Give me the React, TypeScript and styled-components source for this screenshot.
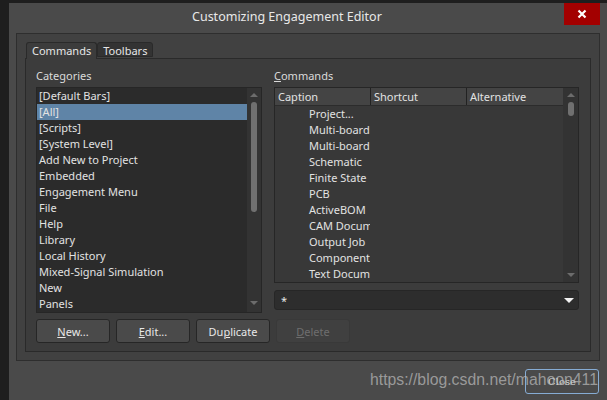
import styled, { createGlobalStyle } from 'styled-components';

const GlobalStyle = createGlobalStyle`
  html, body {
    margin: 0;
    padding: 0;
    background: #1e1e1e;
  }
  body {
    font-family: 'Noto Sans', 'DejaVu Sans', sans-serif;
    font-size: 11px;
    color: #e0e0e0;
  }
`;

interface ActiveProps {
  $active?: boolean;
}

interface ThumbProps {
  $top: number;
  $length: number;
}

const Screen = styled.div`
  width: 607px;
  height: 400px;
  box-sizing: border-box;
  padding: 3px 0 0 9px;
  display: flex;
  overflow: hidden;
`;

const Window = styled.div`
  flex: 1;
  display: flex;
  flex-direction: column;
  background: #4a4a4a;
`;

const TitleBar = styled.div`
  height: 30px;
  display: flex;
  align-items: flex-start;
  flex-shrink: 0;
`;

const Title = styled.div`
  margin-left: 183px;
  line-height: 28px;
  font-size: 12.5px;
  color: #e8e8e8;
`;

const CloseX = styled.button`
  margin-left: auto;
  margin-right: 7px;
  width: 36px;
  height: 22px;
  border: none;
  padding: 0;
  background: #a30000;
  display: flex;
  align-items: center;
  justify-content: center;
`;

const GroupBox = styled.div`
  margin: 0 7px;
  height: 328px;
  flex-shrink: 0;
  box-sizing: border-box;
  border: 1px solid #2e2e2e;
  background: #414141;
  padding: 8px;
  display: flex;
  flex-direction: column;
`;

const TabRow = styled.div`
  display: flex;
  align-items: flex-end;
  height: 16px;
  padding-left: 1px;
  position: relative;
  z-index: 1;
`;

const Tab = styled.div<ActiveProps>`
  box-sizing: border-box;
  height: ${(p) => (p.$active ? '17px' : '15px')};
  margin-bottom: ${(p) => (p.$active ? '-1px' : '1px')};
  padding: 0 5px;
  line-height: 15px;
  border: 1px solid #2a2a2a;
  border-bottom: ${(p) => (p.$active ? 'none' : '1px solid #2a2a2a')};
  border-radius: 3px 3px 0 0;
  background: ${(p) => (p.$active ? '#3c3c3c' : '#333333')};
  color: #e6e6e6;
  white-space: nowrap;
`;

const TabPage = styled.div`
  flex: 1;
  border: 1px solid #2a2a2a;
  background: #3c3c3c;
  padding: 9px 11px 0 10px;
  display: grid;
  grid-template-columns: 226px 305px;
  grid-template-rows: auto auto;
  column-gap: 12px;
  align-items: start;
  align-content: start;
`;

const Column = styled.div`
  display: flex;
  flex-direction: column;
`;

const FieldLabel = styled.div`
  line-height: 16px;
  margin-bottom: 3px;
  color: #dadada;
`;

const U = styled.span`
  text-decoration: underline;
`;

const ListBox = styled.div<{ $height: number; $bg: string }>`
  height: ${(p) => p.$height}px;
  box-sizing: border-box;
  border: 1px solid #262626;
  background: ${(p) => p.$bg};
  display: flex;
  overflow: hidden;
`;

const ListItems = styled.div`
  flex: 1;
  overflow: hidden;
`;

const CategoryItem = styled.div<ActiveProps>`
  height: 16px;
  line-height: 16px;
  padding-left: 2px;
  white-space: nowrap;
  color: #e2e2e2;
  background: ${(p) => (p.$active ? '#5f84a7' : 'transparent')};
`;

const ScrollTrack = styled.div<{ $width: number; $bottom: number }>`
  width: ${(p) => p.$width}px;
  flex-shrink: 0;
  background: #333333;
  display: flex;
  flex-direction: column;
  align-items: center;
  padding: 5px 0 ${(p) => p.$bottom}px;
  box-sizing: border-box;
`;

const ArrowUp = styled.div`
  width: 0;
  height: 0;
  border-left: 4px solid transparent;
  border-right: 4px solid transparent;
  border-bottom: 4px solid #6c6c6c;
`;

const ArrowDown = styled.div`
  margin-top: auto;
  width: 0;
  height: 0;
  border-left: 4px solid transparent;
  border-right: 4px solid transparent;
  border-top: 4px solid #6c6c6c;
`;

const Thumb = styled.div<ThumbProps>`
  margin-top: ${(p) => p.$top}px;
  width: 6px;
  height: ${(p) => p.$length}px;
  border-radius: 3px;
  background: #707070;
`;

const Header = styled.div`
  display: flex;
  height: 18px;
  box-sizing: border-box;
  border-bottom: 1px solid #2c2c2c;
  background: #444444;
`;

const HeaderCell = styled.div<{ $width?: number; $sep?: boolean }>`
  width: ${(p) => (p.$width ? `${p.$width}px` : 'auto')};
  flex: ${(p) => (p.$width ? 'none' : '1')};
  padding-left: 3px;
  box-sizing: border-box;
  line-height: 17px;
  color: #e2e2e2;
  border-left: ${(p) => (p.$sep ? '1px solid #222' : 'none')};
  white-space: nowrap;
`;

const CommandRow = styled.div`
  display: flex;
  height: 16px;
  line-height: 16px;
`;

const CaptionCell = styled.div`
  width: 95px;
  padding-left: 34px;
  box-sizing: border-box;
  overflow: hidden;
  white-space: nowrap;
  color: #e2e2e2;
`;

const ButtonRow = styled.div`
  grid-column: 1 / -1;
  display: flex;
  gap: 6px;
  margin-top: 6px;
`;

const Button = styled.button<{ $disabled?: boolean }>`
  width: 74px;
  height: 24px;
  flex-shrink: 0;
  padding: 0;
  font-family: inherit;
  font-size: 11px;
  border-radius: 3px;
  border: 1px solid ${(p) => (p.$disabled ? '#393939' : '#262626')};
  background: ${(p) => (p.$disabled ? '#404040' : '#4a4a4a')};
  color: ${(p) => (p.$disabled ? '#6e6e6e' : '#e8e8e8')};
`;

const Combo = styled.div`
  margin-top: 7px;
  height: 20px;
  box-sizing: border-box;
  border: 1px solid #262626;
  border-radius: 3px;
  background: #2d2d2d;
  display: flex;
  align-items: center;
  padding: 0 4px 0 6px;
  color: #e8e8e8;
`;

const ComboArrow = styled.div`
  margin-left: auto;
  width: 0;
  height: 0;
  border-left: 5px solid transparent;
  border-right: 5px solid transparent;
  border-top: 5px solid #f2f2f2;
`;

const Footer = styled.div`
  flex: 1;
  display: flex;
  justify-content: flex-end;
  align-items: flex-start;
  padding: 8px 8px 0 0;
  position: relative;
`;

const CloseButton = styled.button`
  width: 74px;
  height: 25px;
  padding: 0;
  border: 1px solid #86acd4;
  border-radius: 3px;
  background: #4a4a4a;
  color: #d8d8d8;
  font-family: 'DejaVu Serif', serif;
  font-size: 10px;
`;

const Watermark = styled.div`
  position: absolute;
  right: 9px;
  top: 10px;
  font-family: 'Liberation Sans', Arial, sans-serif;
  font-size: 15.8px;
  line-height: 18px;
  color: rgba(190, 190, 190, 0.7);
  pointer-events: none;
  white-space: nowrap;
`;

const categories = [
  '[Default Bars]',
  '[All]',
  '[Scripts]',
  '[System Level]',
  'Add New to Project',
  'Embedded',
  'Engagement Menu',
  'File',
  'Help',
  'Library',
  'Local History',
  'Mixed-Signal Simulation',
  'New',
  'Panels',
  'Project',
];

const commands = [
  'Project...',
  'Multi-board',
  'Multi-board',
  'Schematic',
  'Finite State',
  'PCB',
  'ActiveBOM',
  'CAM Document',
  'Output Job',
  'Component',
  'Text Document',
];

const App = () => {
  return (
    <Screen>
      <GlobalStyle />
      <Window>
        <TitleBar>
          <Title>Customizing Engagement Editor</Title>
          <CloseX aria-label="close">
            <svg width="10" height="10" viewBox="0 0 10 10">
              <path d="M1.5 1.5 L8.5 8.5 M8.5 1.5 L1.5 8.5" stroke="#fff" strokeWidth="2.2" />
            </svg>
          </CloseX>
        </TitleBar>

        <GroupBox>
          <TabRow>
            <Tab $active>Commands</Tab>
            <Tab>Toolbars</Tab>
          </TabRow>
          <TabPage>
            <Column>
              <FieldLabel>
                Cate<U>g</U>ories
              </FieldLabel>
              <ListBox $height={226} $bg="#2b2b2b">
                <ListItems>
                  {categories.map((c) => (
                    <CategoryItem key={c} $active={c === '[All]'}>
                      {c}
                    </CategoryItem>
                  ))}
                </ListItems>
                <ScrollTrack $width={14} $bottom={7}>
                  <ArrowUp />
                  <Thumb $top={5} $length={110} />
                  <ArrowDown />
                </ScrollTrack>
              </ListBox>
            </Column>

            <Column>
              <FieldLabel>
                <U>C</U>ommands
              </FieldLabel>
              <ListBox $height={196} $bg="#383838">
                <ListItems>
                  <Header>
                    <HeaderCell $width={95}>Caption</HeaderCell>
                    <HeaderCell $width={96} $sep>
                      Shortcut
                    </HeaderCell>
                    <HeaderCell $sep>Alternative</HeaderCell>
                  </Header>
                  {commands.map((c, i) => (
                    <CommandRow key={i}>
                      <CaptionCell>{c}</CaptionCell>
                    </CommandRow>
                  ))}
                </ListItems>
                <ScrollTrack $width={15} $bottom={5}>
                  <ArrowUp />
                  <Thumb $top={5} $length={14} />
                  <ArrowDown />
                </ScrollTrack>
              </ListBox>
              <Combo>
                *
                <ComboArrow />
              </Combo>
            </Column>

            <ButtonRow>
              <Button>
                <U>N</U>ew...
              </Button>
              <Button>
                <U>E</U>dit...
              </Button>
              <Button>
                Du<U>p</U>licate
              </Button>
              <Button $disabled>
                <U>D</U>elete
              </Button>
            </ButtonRow>
          </TabPage>
        </GroupBox>

        <Footer>
          <CloseButton>Close</CloseButton>
          <Watermark>https://blog.csdn.net/mahoon411</Watermark>
        </Footer>
      </Window>
    </Screen>
  );
};

export default App;
